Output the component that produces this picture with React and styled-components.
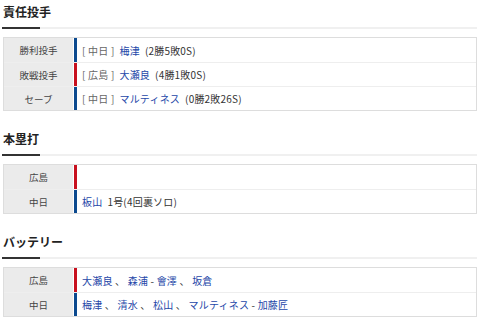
import React from "react";
import styled, {createGlobalStyle} from "styled-components";

const GlobalStyle = createGlobalStyle`
   body {
      margin: 0;
      background: #fff;
      font-family: "Noto Sans CJK JP", "Noto Sans", sans-serif;
      color: #333;
   }
`;
const Page = styled.div`
   width: 480px;
   padding: 0 3px;
   box-sizing: border-box;
`;
const Section = styled.section`
   margin-top: ${(p) => (p.first ? "0" : "16px")};
`;
const Heading = styled.h2`
   position: relative;
   margin: 0;
   padding: 4px 0 7px 0;
   font-size: 12px;
   line-height: 16px;
   font-weight: bold;
   color: #222;
   border-bottom: 2px solid #f0f0f0;
   &::after {
      content: "";
      position: absolute;
      left: -1px;
      bottom: -2px;
      width: 38px;
      height: 2px;
      background: #333;
   }
`;
const Table = styled.div`
   margin-top: 8px;
   border: 1px solid #ddd;
`;
const Row = styled.div`
   display: grid;
   grid-template-columns: 70px 1fr;
   height: 24px;
   border-top: ${(p) => (p.first ? "none" : "1px solid #eee")};
   box-sizing: border-box;
`;
const Label = styled.div`
   display: flex;
   align-items: center;
   justify-content: center;
   background: #ebebeb;
   font-size: 9.5px;
   color: #444;
   border-right: 1px solid #fff;
`;
const Value = styled.div`
   display: flex;
   align-items: center;
   padding-left: 5px;
   border-left: 3px solid ${(p) => (p.team === "carp" ? "#c8101e" : "#0c4a8f")};
   font-size: 10px;
   letter-spacing: 0.2px;
   white-space: pre;
   color: #333;
`;
const Team = styled.span`
   color: #666;
   margin-right: 5px;
`;
const Player = styled.a`
   color: #2547a8;
   text-decoration: none;
`;
const Record = styled.span`
   margin-left: 5px;
`;

const pitchers = [
   {label: "勝利投手", team: "dragons", name: "中日", player: "梅津", rec: "(2勝5敗0S)"},
   {label: "敗戦投手", team: "carp", name: "広島", player: "大瀬良", rec: "(4勝1敗0S)"},
   {label: "セーブ", team: "dragons", name: "中日", player: "マルティネス", rec: "(0勝2敗26S)"},
];

const battery = [
   {label: "広島", team: "carp", parts: [["大瀬良", " 、 "], ["森浦", " - "], ["會澤", " 、 "], ["坂倉", ""]]},
   {label: "中日", team: "dragons", parts: [["梅津", " 、 "], ["清水", " 、 "], ["松山", " 、 "], ["マルティネス", " - "], ["加藤匠", ""]]},
];

const App = () => {
   return (
      <Page>
         <GlobalStyle />
         <Section first>
            <Heading>責任投手</Heading>
            <Table>
               {pitchers.map((p, i) => (
                  <Row key={p.label} first={i === 0}>
                     <Label>{p.label}</Label>
                     <Value team={p.team}>
                        <Team>[ {p.name} ]</Team>
                        <Player href="#">{p.player}</Player>
                        <Record>{p.rec}</Record>
                     </Value>
                  </Row>
               ))}
            </Table>
         </Section>
         <Section>
            <Heading>本塁打</Heading>
            <Table>
               <Row first>
                  <Label>広島</Label>
                  <Value team="carp"></Value>
               </Row>
               <Row>
                  <Label>中日</Label>
                  <Value team="dragons">
                     <Player href="#">板山</Player>
                     <Record>1号(4回裏ソロ)</Record>
                  </Value>
               </Row>
            </Table>
         </Section>
         <Section>
            <Heading>バッテリー</Heading>
            <Table>
               {battery.map((b, i) => (
                  <Row key={b.label} first={i === 0}>
                     <Label>{b.label}</Label>
                     <Value team={b.team}>
                        {b.parts.map(([n, sep]) => (
                           <React.Fragment key={n}>
                              <Player href="#">{n}</Player>
                              {sep}
                           </React.Fragment>
                        ))}
                     </Value>
                  </Row>
               ))}
            </Table>
         </Section>
      </Page>
   );
};

export default App;
